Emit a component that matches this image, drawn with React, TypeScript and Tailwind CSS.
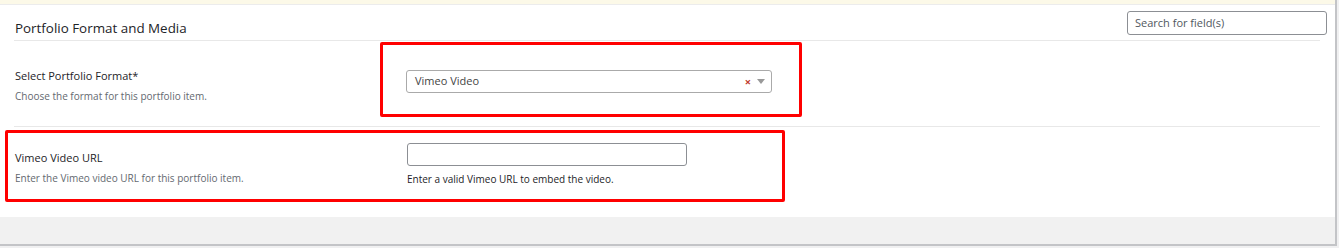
import React from "react";

const font = { fontFamily: '"Open Sans", "Noto Sans", sans-serif' };

function FieldRow({
  label,
  description,
  children,
  className,
}: {
  label: string;
  description: string;
  children: React.ReactNode;
  className?: string;
}) {
  return (
    <div className={`flex ${className ?? ""}`}>
      <div className="w-[407px] shrink-0 pl-[15px]">
        <div className="text-[11px] leading-[14px] text-[#1d2327]">{label}</div>
        <div className="mt-[7px] text-[10px] leading-[13px] text-[#646970]">
          {description}
        </div>
      </div>
      <div className="flex-1">{children}</div>
    </div>
  );
}

export default function App() {
  return (
    <div className="relative h-[248px] w-full overflow-hidden bg-[#f0f0f1]" style={font}>
      <div className="w-[1337px] border-r-2 border-b-2 border-[#c3c4c7] bg-white">
        <div className="h-[4px] bg-[#fcf9e8]" />
        <div className="h-px bg-[#ececec]" />

        <header className="flex h-[35px] items-center justify-between pl-[15px] pr-[8px]">
          <h2 className="pt-[11px] text-[13.4px] font-normal text-[#1d2327]">
            Portfolio Format and Media
          </h2>
          <div className="mt-[1px] flex h-[24px] w-[200px] items-center rounded-[3px] border border-[#8c8f94] px-[7px] text-[11px] text-[#50575e]">
            Search for field(s)
          </div>
        </header>

        <div className="mx-[14px] h-px w-[1306px] bg-[#e8e8e8]" />

        <FieldRow
          label="Select Portfolio Format*"
          description="Choose the format for this portfolio item."
          className="h-[85px] items-center pt-[5px]"
        >
          <div className="-mt-[10px] -ml-px flex h-[23px] w-[366px] items-center rounded-[3px] border border-[#aaaaaa] pl-[8px] pr-[6px] text-[11px] text-[#444444]">
            <span className="flex-1">Vimeo Video</span>
            <span className="mr-[6px] text-[11px] font-bold leading-none text-[#c0392b]">×</span>
            <svg width="8" height="5" viewBox="0 0 8 5">
              <path d="M0 0 L8 0 L4 5 Z" fill="#999999" />
            </svg>
          </div>
        </FieldRow>

        <div className="mx-[14px] h-px w-[1306px] bg-[#e8e8e8]" />

        <FieldRow
          label="Vimeo Video URL"
          description="Enter the Vimeo video URL for this portfolio item."
          className="h-[90px] pt-[24px]"
        >
          <div className="-mt-[8px]">
            <div className="h-[23px] w-[280px] rounded-[3px] border border-[#8c8f94]" />
            <div className="mt-[7px] text-[10px] leading-[13px] text-[#1d2327]">
              Enter a valid Vimeo URL to embed the video.
            </div>
          </div>
        </FieldRow>

        <div className="h-[27px] bg-[#f1f1f1]" />
      </div>

      <div className="pointer-events-none absolute left-[380px] top-[42px] h-[75px] w-[422px] rounded-[2px] border-[3px] border-[#ff0000]" />
      <div className="pointer-events-none absolute left-[5px] top-[130px] h-[72px] w-[780px] rounded-[2px] border-[3px] border-[#ff0000]" />
    </div>
  );
}
